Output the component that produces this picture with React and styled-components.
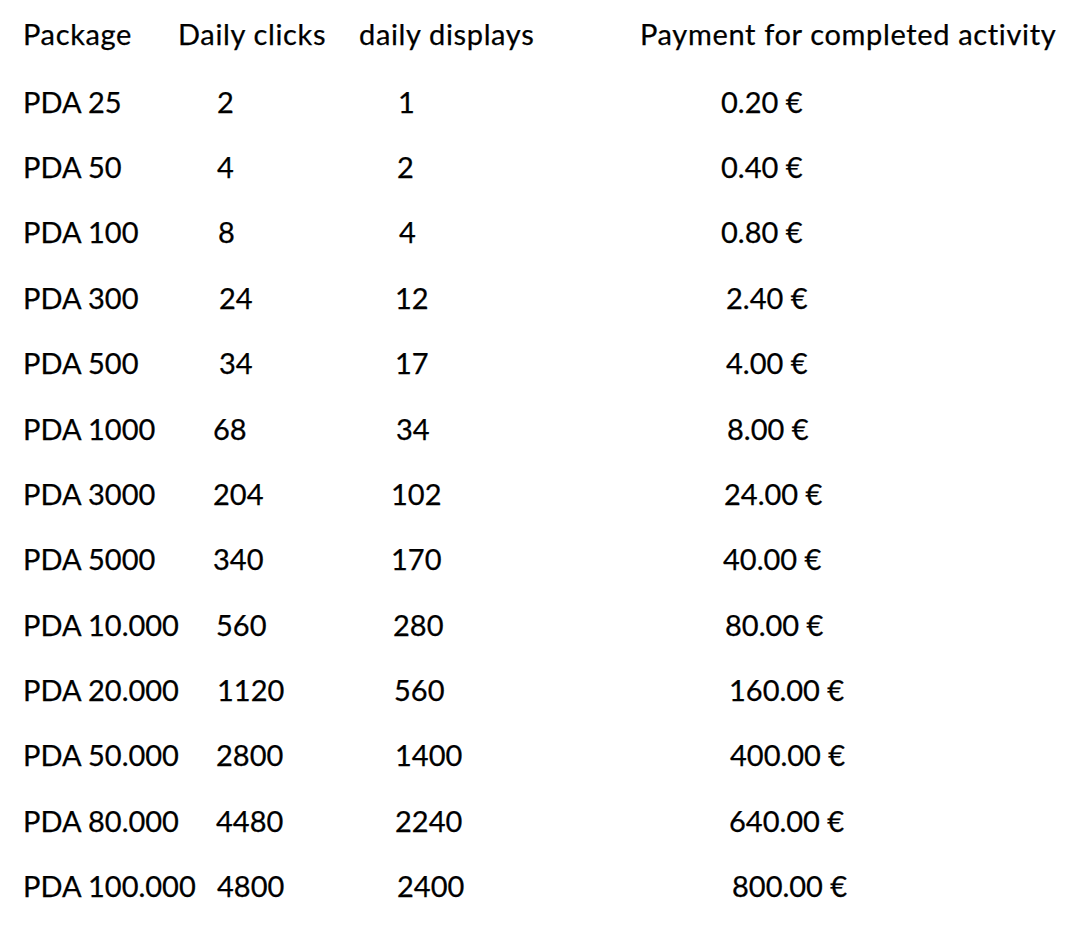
import React from "react";
import styled, { createGlobalStyle } from "styled-components";

const GlobalStyle = createGlobalStyle`
  html, body {
    margin: 0;
    padding: 0;
    background: #ffffff;
  }
`;

const Page = styled.div`
  width: 1080px;
  height: 929px;
  box-sizing: border-box;
  padding: 1px 0 0 23px;
  background: #ffffff;
  color: #000000;
  font-family: "Lato", "Open Sans", sans-serif;
  font-size: 29px;
  overflow: hidden;
`;

const Row = styled.div`
  display: grid;
  grid-template-columns: 155px 181px 281px 1fr;
  align-items: center;
  height: 65.4px;
  margin-bottom: ${(p) => (p.$header ? "2px" : "0")};
  letter-spacing: ${(p) => (p.$header ? "0.65px" : "0")};
`;

const Cell = styled.div`
  padding-left: ${(p) => p.$indent || 0}px;
  white-space: nowrap;
  line-height: 1;
  -webkit-text-stroke: 0.25px #000;
`;

const packages = [
  ["PDA 25", "2", 39, "1", 39, "0.20 €", 81],
  ["PDA 50", "4", 39, "2", 38, "0.40 €", 81],
  ["PDA 100", "8", 40, "4", 40, "0.80 €", 81],
  ["PDA 300", "24", 41, "12", 36, "2.40 €", 86],
  ["PDA 500", "34", 41, "17", 36, "4.00 €", 86],
  ["PDA 1000", "68", 35, "34", 37, "8.00 €", 87],
  ["PDA 3000", "204", 35, "102", 32, "24.00 €", 84],
  ["PDA 5000", "340", 35, "170", 32, "40.00 €", 83],
  ["PDA 10.000", "560", 38, "280", 34, "80.00 €", 85],
  ["PDA 20.000", "1120", 39, "560", 35, "160.00 €", 89],
  ["PDA 50.000", "2800", 38, "1400", 36, "400.00 €", 90],
  ["PDA 80.000", "4480", 38, "2240", 36, "640.00 €", 89],
  ["PDA 100.000", "4800", 39, "2400", 38, "800.00 €", 92],
];

export default function App() {
  return (
    <>
      <GlobalStyle />
      <Page>
        <Row $header>
          <Cell>Package</Cell>
          <Cell>Daily clicks</Cell>
          <Cell>daily displays</Cell>
          <Cell>Payment for completed activity</Cell>
        </Row>
        {packages.map(([name, clicks, ci, displays, di, pay, pi]) => (
          <Row key={name}>
            <Cell>{name}</Cell>
            <Cell $indent={ci}>{clicks}</Cell>
            <Cell $indent={di}>{displays}</Cell>
            <Cell $indent={pi}>{pay}</Cell>
          </Row>
        ))}
      </Page>
    </>
  );
}
